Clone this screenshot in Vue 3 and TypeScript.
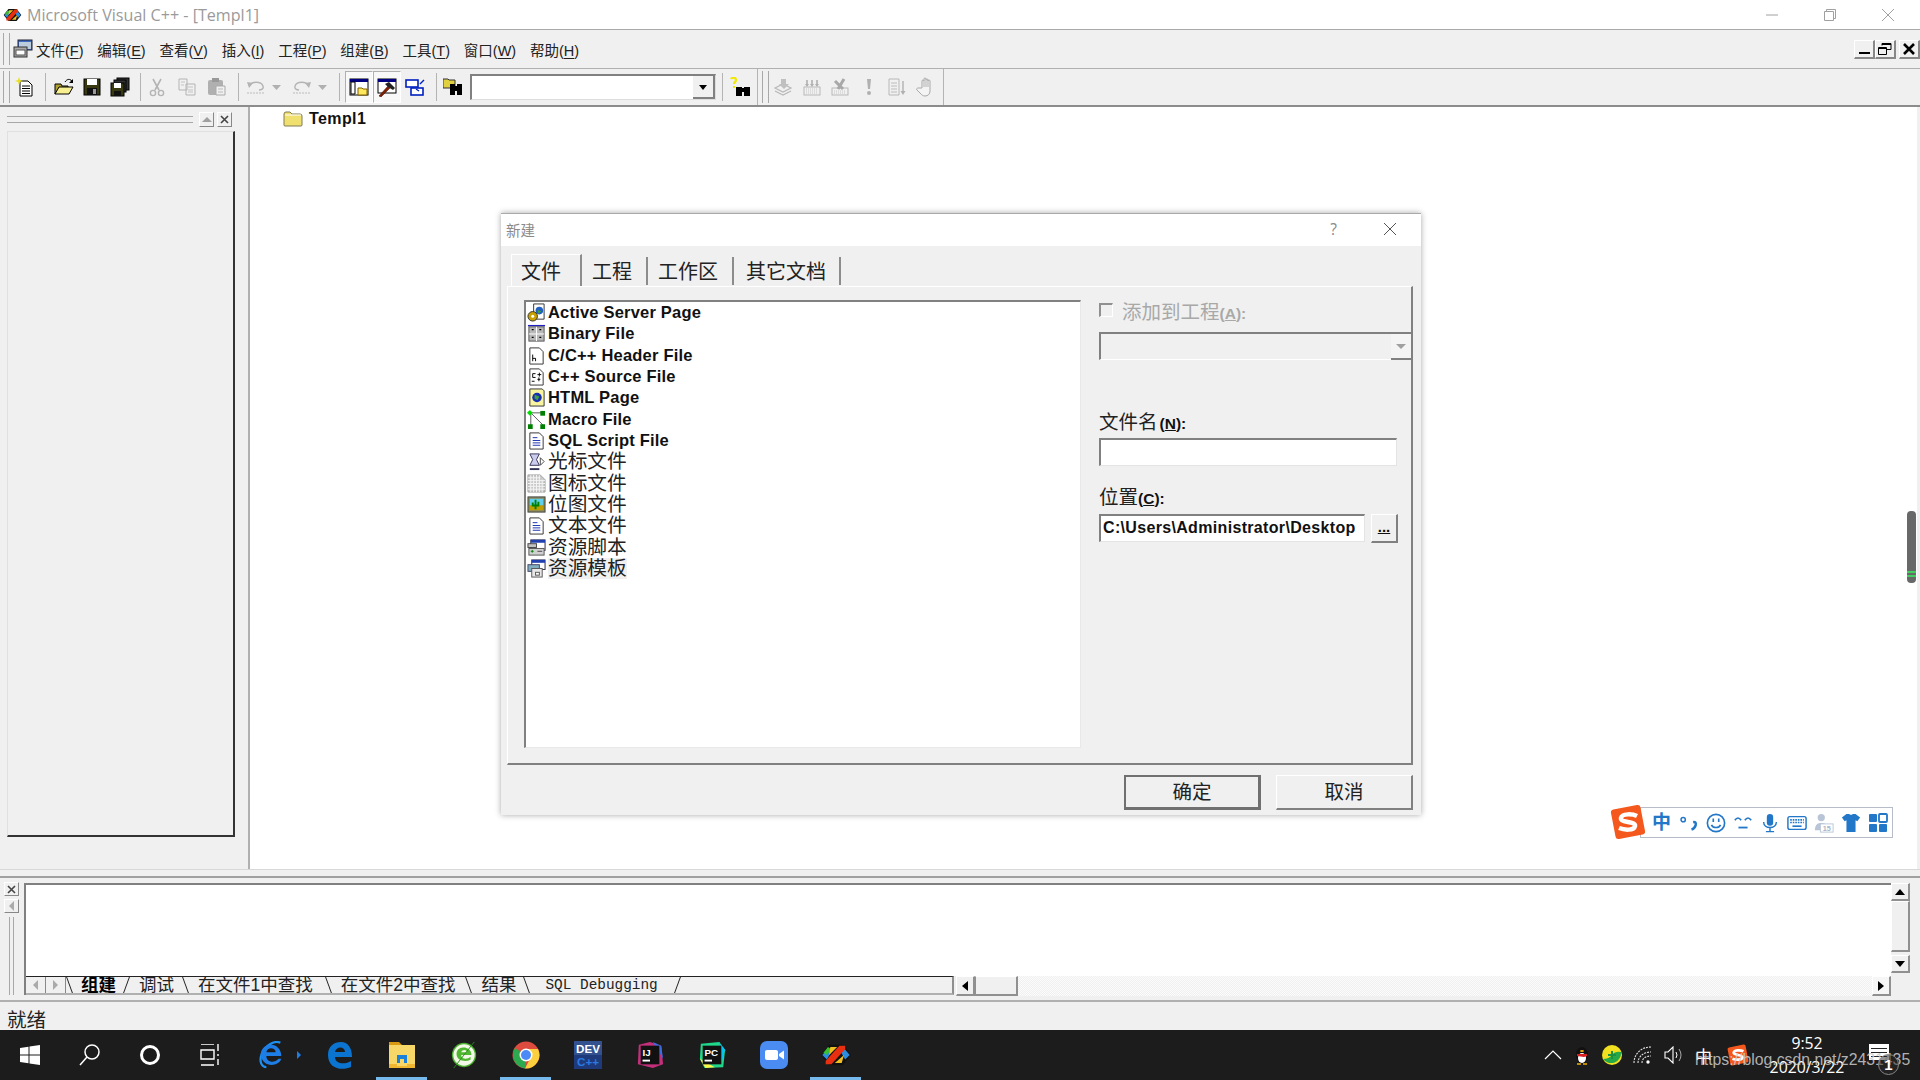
<script setup lang="ts">
interface MenuItem {
  label: string
  key: string
}
interface ToolItem {
  icon?: string
  w?: number
  l?: number
  r?: number
  pressed?: boolean
  combo?: boolean
  grip?: boolean
  sep?: boolean
}
interface OutTab {
  label: string
  before: 'back' | 'fwd'
  cls?: string
}
interface TaskApp {
  icon: string
  on?: boolean
  arrow?: boolean
}

const menus: MenuItem[] = [
  { label: '文件', key: 'F' },
  { label: '编辑', key: 'E' },
  { label: '查看', key: 'V' },
  { label: '插入', key: 'I' },
  { label: '工程', key: 'P' },
  { label: '组建', key: 'B' },
  { label: '工具', key: 'T' },
  { label: '窗口', key: 'W' },
  { label: '帮助', key: 'H' },
]

const tools: ToolItem[] = [
  { grip: true },
  { icon: 'i-new', w: 28 },
  { sep: true, l: 6, r: 4 },
  { icon: 'i-open', w: 28 },
  { icon: 'i-save', w: 28 },
  { icon: 'i-saveall', w: 28 },
  { sep: true, l: 6, r: 1 },
  { icon: 'i-cut', w: 30 },
  { icon: 'i-copy', w: 30 },
  { icon: 'i-paste', w: 30 },
  { sep: true, l: 6, r: 3 },
  { icon: 'i-undo', w: 28 },
  { icon: 'i-drop', w: 14 },
  { sep: false, l: 4 },
  { icon: 'i-redo', w: 28 },
  { icon: 'i-drop', w: 14 },
  { sep: true, l: 9, r: 5 },
  { icon: 'i-wsp', w: 28, pressed: true },
  { icon: 'i-outp', w: 28, pressed: true },
  { icon: 'i-wins', w: 28 },
  { sep: true, l: 7, r: 2 },
  { icon: 'i-find', w: 28 },
  { combo: true },
  { sep: true, l: 6, r: 3 },
  { icon: 'i-ffile', w: 28 },
]

const buildTools = ['i-compile', 'i-build', 'i-stop', 'i-exec', 'i-go', 'i-hand']

const dialogTabs = ['文件', '工程', '工作区', '其它文档']

const files = [
  { icon: 'f-asp', name: 'Active Server Page', latin: true },
  { icon: 'f-bin', name: 'Binary File', latin: true },
  { icon: 'f-h', name: 'C/C++ Header File', latin: true },
  { icon: 'f-cpp', name: 'C++ Source File', latin: true },
  { icon: 'f-html', name: 'HTML Page', latin: true },
  { icon: 'f-macro', name: 'Macro File', latin: true },
  { icon: 'f-txt', name: 'SQL Script File', latin: true },
  { icon: 'f-cur', name: '光标文件' },
  { icon: 'f-ico', name: '图标文件' },
  { icon: 'f-bmp', name: '位图文件' },
  { icon: 'f-txt', name: '文本文件' },
  { icon: 'f-rc', name: '资源脚本' },
  { icon: 'f-rct', name: '资源模板', sel: true },
]

const outTabs: OutTab[] = [
  { label: '组建', before: 'back', cls: 'active' },
  { label: '调试', before: 'fwd' },
  { label: '在文件1中查找', before: 'back', cls: 'long' },
  { label: '在文件2中查找', before: 'back', cls: 'long' },
  { label: '结果', before: 'back', cls: 'short' },
  { label: 'SQL Debugging', before: 'back', cls: 'mono' },
]

const taskApps: TaskApp[] = [
  { icon: 't-ie', arrow: true },
  { icon: 't-edge' },
  { icon: 't-files', on: true },
  { icon: 't-360' },
  { icon: 't-chrome', on: true },
  { icon: 't-dev' },
  { icon: 't-ij' },
  { icon: 't-pc' },
  { icon: 't-zoom' },
  { icon: 't-vc', on: true },
]

const imeIcons = ['m-punct', 'm-smile', 'm-eyes', 'm-mic', 'm-kbd', 'm-user', 'm-shirt', 'm-grid']
</script>

<template>
  <div class="desktop">
    <!-- shared icon sprites -->
    <svg class="sprites" width="0" height="0">
      <defs>
        <symbol id="vc-logo" viewBox="0 0 28 20">
          <path d="M8 1h12l7 9-7 9H8l-7-9z" fill="#111" />
          <path d="M2 10l5-6 3 3-4 7zM26 10l-5-6-3 3 4 7z" fill="#2c8ce0" />
          <path d="M3 8l4-5 3 2-4 5z" fill="#38c030" />
          <path d="M9 3h6l-7 7zM13 17h6l2-7z" fill="#f0c020" />
          <path d="M5 15L17 2h5v3L10 18H5z" fill="#e83010" />
        </symbol>

        <symbol id="i-vcfile" viewBox="0 0 20 20">
          <rect x="5" y="1" width="14" height="10" fill="#3d6cc0" stroke="#223" />
          <rect x="6" y="3" width="12" height="7" fill="#bcd" />
          <rect x="1" y="8" width="13" height="10" fill="#a8a8a8" stroke="#333" />
          <rect x="3" y="11" width="9" height="5" fill="#fff" stroke="#555" />
        </symbol>
        <symbol id="i-new" viewBox="0 0 20 20">
          <path d="M5 4h8l4 4v11H5z" fill="#fff" stroke="#000" />
          <path d="M7 9h8M7 11.500h8M7 14h8M7 16.500h8" stroke="#000" />
          <path d="M4 0l1 3 3 1-3 1-1 3-1-3-3-1 3-1z" fill="#e8e020" />
        </symbol>
        <symbol id="i-open" viewBox="0 0 20 20">
          <path d="M1 17V7h6l1 2h6v2H5z" fill="#b0a030" stroke="#000" />
          <path d="M1 17l4-7h14l-4 7z" fill="#f8f090" stroke="#000" />
          <path d="M11 5c2-3 4-3 6-2l1 2" fill="none" stroke="#000" />
          <path d="M19 2v4h-4z" fill="#000" />
        </symbol>
        <symbol id="i-save" viewBox="0 0 20 20">
          <rect x="2" y="2" width="16" height="16" fill="#3a3a10" stroke="#000" />
          <rect x="5" y="2" width="10" height="6" fill="#fff" />
          <rect x="5" y="11" width="10" height="7" fill="#111" />
          <rect x="11" y="12" width="3" height="5" fill="#999" />
        </symbol>
        <symbol id="i-saveall" viewBox="0 0 20 20">
          <rect x="7" y="1" width="12" height="12" fill="#333" stroke="#000" />
          <rect x="4" y="3" width="12" height="12" fill="#333" stroke="#000" />
          <rect x="1" y="6" width="13" height="13" fill="#3a3a10" stroke="#000" />
          <rect x="4" y="6" width="7" height="5" fill="#fff" />
          <rect x="4" y="14" width="7" height="5" fill="#111" />
        </symbol>
        <symbol id="i-cut" viewBox="0 0 20 20">
          <path d="M6 2l6 11M14 2L8 13" stroke="#b4b4b4" stroke-width="1.600" fill="none" />
          <circle cx="6" cy="16" r="2.600" fill="none" stroke="#b4b4b4" stroke-width="1.400" />
          <circle cx="14" cy="16" r="2.600" fill="none" stroke="#b4b4b4" stroke-width="1.400" />
        </symbol>
        <symbol id="i-copy" viewBox="0 0 20 20">
          <path d="M2 2h8v11H2zM9 7h9v11H9z" fill="#f0f0f0" stroke="#b4b4b4" />
          <path d="M4 5h4M4 8h3M11 10h5M11 13h5M11 15h5" stroke="#c4c4c4" />
        </symbol>
        <symbol id="i-paste" viewBox="0 0 20 20">
          <rect x="1" y="3" width="15" height="15" rx="2" fill="#b0b0b0" />
          <rect x="5" y="1" width="7" height="4" fill="#999" />
          <path d="M9 9h9v9H9z" fill="#f0f0f0" stroke="#aaa" />
          <path d="M11 12h5M11 15h5" stroke="#bbb" />
        </symbol>
        <symbol id="i-undo" viewBox="0 0 20 20">
          <path d="M3 9c3-5 12-5 14 0 1 3-2 4-4 4" fill="none" stroke="#b4b4b4" stroke-width="1.400" />
          <path d="M1 5l6 1-4 5z" fill="#b4b4b4" />
          <path d="M1 16h18" stroke="#bbb" stroke-dasharray="2 1" />
        </symbol>
        <symbol id="i-redo" viewBox="0 0 20 20">
          <path d="M17 9c-3-5-12-5-14 0-1 3 2 4 4 4" fill="none" stroke="#b4b4b4" stroke-width="1.400" />
          <path d="M19 5l-6 1 4 5z" fill="#b4b4b4" />
          <path d="M1 16h18" stroke="#bbb" stroke-dasharray="2 1" />
        </symbol>
        <symbol id="i-drop" viewBox="0 0 14 20">
          <path d="M2 8h9l-4.500 5z" fill="#b0b0b0" />
        </symbol>
        <symbol id="i-wsp" viewBox="0 0 20 20">
          <rect x="1" y="2" width="18" height="16" fill="#fff" stroke="#000" />
          <rect x="1" y="2" width="18" height="3" fill="#000080" />
          <path d="M2 5h4v12H2z" fill="#fff" stroke="#000" />
          <path d="M9 11h4l1 1h4v6H9z" fill="#ffe860" stroke="#806000" />
        </symbol>
        <symbol id="i-outp" viewBox="0 0 20 20">
          <rect x="1" y="2" width="18" height="14" fill="#fff" stroke="#000" />
          <rect x="1" y="2" width="18" height="3" fill="#000080" />
          <path d="M2 19l9-10 2 2-9 9z" fill="#802000" stroke="#300" stroke-width=".5" />
          <path d="M8 7l4-2 6 6-2 2-5-3z" fill="#222" />
        </symbol>
        <symbol id="i-wins" viewBox="0 0 20 20">
          <rect x="1" y="3" width="12" height="7" fill="#fff" stroke="#0020c0" stroke-width="1.600" />
          <rect x="6" y="11" width="12" height="7" fill="#fff" stroke="#0020c0" stroke-width="1.600" />
          <path d="M15 7l4-4M14 14l-3-2" stroke="#0020c0" stroke-width="1.400" />
        </symbol>
        <symbol id="i-find" viewBox="0 0 20 20">
          <path d="M0 2h5l1 1h6v8H0z" fill="#e0d040" stroke="#333" />
          <rect x="7" y="7" width="5" height="11" fill="#000" />
          <rect x="14" y="7" width="5" height="11" fill="#000" />
          <rect x="11" y="9" width="4" height="5" fill="#000" />
        </symbol>
        <symbol id="i-ffile" viewBox="0 0 20 20">
          <path d="M1 2c1-2 5-2 5 1 0 2-2 2-2 4" fill="none" stroke="#f0e800" stroke-width="2.200" />
          <rect x="3" y="9" width="2" height="2" fill="#f0e800" />
          <rect x="6" y="10" width="6" height="9" fill="#000" />
          <rect x="14" y="10" width="6" height="9" fill="#000" />
          <rect x="11" y="11" width="4" height="4" fill="#000" />
        </symbol>
        <symbol id="i-compile" viewBox="0 0 20 20">
          <path d="M2 11l8-4 8 4-8 4zM2 14l8 4 8-4" fill="none" stroke="#b8b8b8" stroke-width="1.200" />
          <path d="M8 2h5v5h3l-5 5-5-5h2z" fill="#c0c0c0" />
        </symbol>
        <symbol id="i-build" viewBox="0 0 20 20">
          <rect x="2" y="10" width="16" height="8" fill="none" stroke="#b8b8b8" />
          <path d="M4 12h12M4 14h12M4 16h12" stroke="#c8c8c8" stroke-dasharray="1 1" />
          <path d="M5 3v5M10 3v5M15 3v5" stroke="#b0b0b0" stroke-width="1.600" />
          <path d="M3 7h4l-2 3zM8 7h4l-2 3zM13 7h4l-2 3z" fill="#b0b0b0" />
        </symbol>
        <symbol id="i-stop" viewBox="0 0 20 20">
          <rect x="2" y="11" width="16" height="7" fill="none" stroke="#b8b8b8" />
          <path d="M4 14h12M4 16h12" stroke="#c8c8c8" stroke-dasharray="1 1" />
          <path d="M5 4l8 8M14 2L8 12" stroke="#a8a8a8" stroke-width="3" />
        </symbol>
        <symbol id="i-exec" viewBox="0 0 20 20">
          <path d="M8 2h4l-1 10H9z" fill="#b0b0b0" />
          <circle cx="10" cy="16" r="2" fill="#b0b0b0" />
        </symbol>
        <symbol id="i-go" viewBox="0 0 20 20">
          <path d="M2 2h10v16H2z" fill="none" stroke="#b8b8b8" />
          <path d="M4 6h6M4 9h6M4 12h6M4 15h6" stroke="#bcbcbc" />
          <path d="M16 4v11" stroke="#b0b0b0" stroke-width="1.400" />
          <path d="M13.500 14h5l-2.500 4z" fill="#b0b0b0" />
        </symbol>
        <symbol id="i-hand" viewBox="0 0 20 20">
          <path
            d="M6 11V4a1 1 0 0 1 2 0V2a1 1 0 0 1 2 0v1a1 1 0 0 1 2 0v1a1 1 0 0 1 2 0v10c0 3-2 5-5 5-2 0-3-1-4-2l-4-4c-1-1 0-2 1-2z"
            fill="#f4f4f4"
            stroke="#a8a8a8"
          />
          <path d="M8 4v6M10 3v7M12 3v7" stroke="#b0b0b0" />
        </symbol>

        <symbol id="x-folder" viewBox="0 0 20 16">
          <path d="M1 3q0-2 2-2h4l2 2h8q2 0 2 2v9q0 1-1 1H2q-1 0-1-1z" fill="#f0e070" stroke="#807a50" />
          <path d="M2 4h16" stroke="#fff" />
        </symbol>

        <symbol id="f-asp" viewBox="0 0 20 20">
          <path d="M7 1h11v16H7z" fill="#fff" stroke="#333" />
          <circle cx="13" cy="8" r="4" fill="#2060c0" />
          <path d="M11 7l4 2-3 2z" fill="#40a040" />
          <circle cx="6" cy="14" r="5" fill="#c8a000" stroke="#333" />
          <circle cx="6" cy="14" r="1.600" fill="#fff" />
        </symbol>
        <symbol id="f-bin" viewBox="0 0 20 20">
          <rect x="1" y="1" width="18" height="1.500" fill="#2020c0" />
          <rect x="2" y="3" width="16" height="15" fill="#b8b8b8" stroke="#555" />
          <path d="M10 3v15M2 10.500h16" stroke="#fff" />
          <path d="M5 6h2M13 6h2M5 14h2M13 14h2" stroke="#000" stroke-width="1.400" />
        </symbol>
        <symbol id="f-h" viewBox="0 0 20 20">
          <path d="M3 2h10l4 4v13H3z" fill="#fff" stroke="#333" />
          <path d="M6 9v7M6 13h3v3" fill="none" stroke="#000" />
        </symbol>
        <symbol id="f-cpp" viewBox="0 0 20 20">
          <path d="M3 2h10l4 4v13H3z" fill="#fff" stroke="#333" />
          <path d="M9 7H6v4h3M5 15h3M11 8h4M13 6v4M11 13h3M12.500 11v4" fill="none" stroke="#000" />
        </symbol>
        <symbol id="f-html" viewBox="0 0 20 20">
          <path d="M3 1h13l2 2v16H3z" fill="#f8f4a0" stroke="#333" />
          <circle cx="10.500" cy="10" r="5" fill="#1830b0" />
          <path d="M8 7l5 2-2 4-3-2z" fill="#40a040" />
        </symbol>
        <symbol id="f-macro" viewBox="0 0 20 20">
          <path d="M4 3l13 13M4 3v14M4 3h13" stroke="#555" fill="none" />
          <path d="M3 0l3 3-3 3-3-3z" fill="#00e000" />
          <rect x="14" y="1" width="5" height="5" fill="#008000" />
          <rect x="1" y="15" width="5" height="5" fill="#008000" />
          <rect x="14" y="15" width="5" height="5" fill="#008000" />
        </symbol>
        <symbol id="f-txt" viewBox="0 0 20 20">
          <path d="M3 2h10l4 4v13H3z" fill="#fff" stroke="#333" />
          <path d="M6 7h5M6 10h8M6 12.500h8M6 15h8" stroke="#1830b0" />
        </symbol>
        <symbol id="f-cur" viewBox="0 0 20 20">
          <path d="M3 2h10l-3 6 3 6H3l3-6z" fill="#cce" stroke="#335" />
          <path d="M3 18h10" stroke="#335" stroke-width="2" />
          <path d="M14 6l4 4-4 4z" fill="#fff" stroke="#444" />
        </symbol>
        <symbol id="f-ico" viewBox="0 0 20 20">
          <path d="M1 1h13l5 5v13H1z" fill="#c8c8c8" stroke="#a0a0a0" />
          <path d="M4 1v18M7 1v18M10 1v18M13 1v18M16 6v13M1 4h13M1 7h18M1 10h18M1 13h18M1 16h18" stroke="#f4f4f4" />
        </symbol>
        <symbol id="f-bmp" viewBox="0 0 20 20">
          <rect x="1" y="2" width="18" height="16" fill="#8a8a60" stroke="#444" />
          <rect x="3" y="4" width="14" height="7" fill="#60d0f0" />
          <rect x="3" y="11" width="14" height="5" fill="#c0a000" />
          <path d="M9 5v10M6 8v3h6V7" fill="none" stroke="#008000" stroke-width="2" />
        </symbol>
        <symbol id="f-rc" viewBox="0 0 20 20">
          <rect x="4" y="2" width="15" height="11" fill="#fff" stroke="#224" />
          <rect x="4" y="2" width="15" height="3" fill="#2040b0" />
          <rect x="1" y="6" width="9" height="4" fill="#c0c0c0" stroke="#444" />
          <rect x="2" y="11" width="16" height="7" fill="#d0d0d0" stroke="#555" />
          <path d="M4 14h3M5.500 12.500v3" stroke="#008000" />
          <path d="M11 14h5" stroke="#444" />
        </symbol>
        <symbol id="f-rct" viewBox="0 0 20 20">
          <rect x="5" y="1" width="14" height="10" fill="#fff" stroke="#224" />
          <rect x="5" y="1" width="14" height="3" fill="#2040b0" />
          <rect x="1" y="6" width="12" height="7" fill="#80b0c0" stroke="#446" />
          <rect x="5" y="10" width="11" height="9" fill="#e8e8e8" stroke="#555" />
          <rect x="9" y="14" width="4" height="3" fill="#fff" stroke="#555" />
        </symbol>

        <symbol id="t-win" viewBox="0 0 20 20">
          <path d="M0 3l8.500-1.300V9.500H0zM9.500 1.500L20 0v9.500H9.500zM0 10.500h8.500v7.800L0 17zM9.500 10.500H20V20L9.500 18.500z" fill="#fff" />
        </symbol>
        <symbol id="t-ie" viewBox="0 0 28 30">
          <path d="M24 2C18-1 8 4 4 14c-3 8 0 14 5 14" fill="none" stroke="#1e90f0" stroke-width="2.400" />
          <path d="M3 15C3 8 8 4 14 4s11 5 11 12H9c0 7 9 8 13 3h3c-3 9-20 10-22-4zm6-3h10c0-5-9-6-10 0z" fill="#1e7ee8" />
        </symbol>
        <symbol id="t-edge" viewBox="0 0 26 28">
          <path d="M1 14C1 5 7 1 14 1s11 6 11 15H8c0 7 10 8 16 4v6c-9 4-23 2-23-12zm7-3h10c0-6-9-6-10 0z" fill="#0a74d0" />
        </symbol>
        <symbol id="t-files" viewBox="0 0 28 28">
          <path d="M1 1h10l3 3H1z" fill="#d89a10" />
          <rect x="1" y="4" width="26" height="23" fill="#f7d768" />
          <path d="M9 22v-8h10v8h-3v-4h-4v4z" fill="#1a80d8" />
          <rect x="1" y="23" width="8" height="4" fill="#f0b830" />
          <rect x="19" y="23" width="8" height="4" fill="#f0b830" />
          <rect x="9" y="25" width="10" height="2" fill="#f0b830" />
        </symbol>
        <symbol id="t-360" viewBox="0 0 28 30">
          <circle cx="14" cy="15" r="13" fill="#4cb030" />
          <circle cx="14" cy="15" r="11.500" fill="#f4f8e8" />
          <path d="M6 14C6 8 11 7 14 7s8 2 8 8H11c0 5 7 5 10 2v3c-6 3-15 1-15-6zm5-2h6c0-3-5-3-6 0z" fill="#50b830" />
          <path d="M25 1L3 29" stroke="#2a8a20" stroke-width="1" />
        </symbol>
        <symbol id="t-chrome" viewBox="0 0 28 28">
          <circle cx="14" cy="14" r="13.500" fill="#dd4b3e" />
          <path d="M14 14L3 7A13.500 13.500 0 0 0 13 27.500z" fill="#2da94f" />
          <path d="M14 8h12a13.500 13.500 0 0 1-13 19.500L20 14z" fill="#fccf3e" />
          <circle cx="14" cy="14" r="6.500" fill="#fff" />
          <circle cx="14" cy="14" r="5" fill="#4c8bf5" />
        </symbol>
        <symbol id="t-dev" viewBox="0 0 30 30">
          <rect width="30" height="30" fill="#1f3a7a" />
          <rect width="30" height="15" fill="#33518f" />
          <text x="15" y="13" text-anchor="middle" font-size="12.500" font-weight="700" fill="#fff" font-family="Liberation Sans">DEV</text>
          <text x="15" y="27" text-anchor="middle" font-size="12.500" font-weight="700" fill="#2a7ae0" font-family="Liberation Sans">C++</text>
        </symbol>
        <symbol id="t-ij" viewBox="0 0 30 30">
          <path d="M3 4l12-3 12 4 2 20-11 4L2 25z" fill="#c42f7b" />
          <path d="M18 1l9 4 2 14z" fill="#3e6be0" />
          <rect x="5" y="5" width="20" height="20" fill="#111" />
          <text x="7" y="16" font-size="10.500" font-weight="700" fill="#fff" font-family="Liberation Sans">IJ</text>
          <rect x="7" y="20" width="8" height="2" fill="#fff" />
        </symbol>
        <symbol id="t-pc" viewBox="0 0 30 30">
          <path d="M3 3l20-2 6 9-2 18-20 1-5-10z" fill="#21d789" />
          <path d="M22 1l7 8-3 12z" fill="#07c3f2" />
          <path d="M2 19l6 10 10-1z" fill="#fcf84a" />
          <rect x="5" y="5" width="20" height="20" fill="#111" />
          <text x="7" y="16" font-size="10.500" font-weight="700" fill="#fff" font-family="Liberation Sans">PC</text>
          <rect x="7" y="20" width="8" height="2" fill="#fff" />
        </symbol>
        <symbol id="t-zoom" viewBox="0 0 28 28">
          <rect width="28" height="28" rx="7" fill="#4a8cf2" />
          <rect x="5" y="9" width="13" height="10" rx="2" fill="#fff" />
          <path d="M19 13l5-3.500v9L19 15z" fill="#fff" />
        </symbol>

        <symbol id="m-punct" viewBox="0 0 24 20">
          <circle cx="5" cy="6" r="2.600" fill="none" stroke="#2277c8" stroke-width="1.800" />
          <path d="M17 9q4-.5 3 3.500-1 4-5 5.500" fill="none" stroke="#2277c8" stroke-width="3" />
        </symbol>
        <symbol id="m-smile" viewBox="0 0 22 22">
          <circle cx="11" cy="11" r="9.500" fill="none" stroke="#2277c8" stroke-width="1.800" />
          <path d="M8 6v4M14 6v4" stroke="#2277c8" stroke-width="1.800" />
          <path d="M6 13c2 4 8 4 10 0" fill="none" stroke="#2277c8" stroke-width="1.800" />
        </symbol>
        <symbol id="m-eyes" viewBox="0 0 22 22">
          <path d="M2 8q3.500-5 7 0M13 8q3.500-5 7 0" fill="none" stroke="#2277c8" stroke-width="1.800" />
          <path d="M6 16h10" stroke="#2277c8" stroke-width="2" />
        </symbol>
        <symbol id="m-mic" viewBox="0 0 22 22">
          <rect x="7.500" y="1" width="7" height="13" rx="3.500" fill="#2277c8" />
          <path d="M4 10c0 8 14 8 14 0M11 16v4M6.500 20.500h9" fill="none" stroke="#2277c8" stroke-width="1.600" />
        </symbol>
        <symbol id="m-kbd" viewBox="0 0 22 18">
          <rect x="1" y="2" width="20" height="14" rx="2" fill="none" stroke="#2277c8" stroke-width="1.600" />
          <path d="M3.500 5.500h15M3.500 8.500h15" stroke="#2277c8" stroke-width="1.800" stroke-dasharray="1.800 1" />
          <path d="M6 12.500h10" stroke="#2277c8" stroke-width="1.800" />
        </symbol>
        <symbol id="m-user" viewBox="0 0 22 22">
          <circle cx="8" cy="5" r="4" fill="#b9c5d6" />
          <path d="M1 19c0-6 3-8 7-8s5 1 6 3v5z" fill="#b9c5d6" />
          <rect x="7" y="12" width="14" height="9" fill="#fff" stroke="#b9c5d6" />
          <text x="14" y="20" text-anchor="middle" font-size="8" font-weight="700" fill="#a9b5c6" font-family="Liberation Sans">15</text>
        </symbol>
        <symbol id="m-shirt" viewBox="0 0 22 22">
          <path d="M6 1h3q2 2 4 0h3l5 4-3 4-2-1v13H6V8L4 9 1 5z" fill="#2277c8" />
        </symbol>
        <symbol id="m-grid" viewBox="0 0 20 20">
          <rect x="1" y="1" width="8" height="8" rx="1" fill="#2277c8" />
          <rect x="11" y="1" width="8" height="8" rx="1" fill="none" stroke="#2277c8" stroke-width="1.800" />
          <rect x="1" y="11" width="8" height="8" rx="1" fill="#2277c8" />
          <rect x="11" y="11" width="8" height="8" rx="1" fill="#2277c8" />
        </symbol>
        <symbol id="sogou" viewBox="0 0 36 36">
          <rect x="3" y="3" width="30" height="30" rx="3" fill="#f4581c" transform="rotate(-11 18 18)" />
          <path d="M27 12c-4-2-15-3-16 2-1 5 15 3 14 8-1 5-11 4-16 2" fill="none" stroke="#fff" stroke-width="4.500" />
        </symbol>
      </defs>
    </svg>

    <header class="titlebar">
      <svg class="vc-icon"><use href="#vc-logo" /></svg>
      <span class="app-title">Microsoft Visual C++ - [Templ1]</span>
      <div class="win-controls">
        <svg width="12" height="12" viewBox="0 0 12 12"><path d="M0 6h12" stroke="#a0a0a0" /></svg>
        <svg width="12" height="12" viewBox="0 0 12 12">
          <path d="M.5 2.500h9v9h-9zM2.500 2.500v-2h9v9h-2" fill="none" stroke="#a0a0a0" />
        </svg>
        <svg width="12" height="12" viewBox="0 0 12 12"><path d="M0 0l12 12M12 0L0 12" stroke="#a0a0a0" /></svg>
      </div>
    </header>

    <nav class="menubar">
      <span class="grip"></span>
      <svg class="menu-icon"><use href="#i-vcfile" /></svg>
      <ul class="menu-list">
        <li v-for="m in menus" :key="m.key" class="menu-item">
          {{ m.label }}(<u>{{ m.key }}</u>)
        </li>
      </ul>
      <div class="mdi-controls">
        <button class="mdi-btn"><i class="mdi-min"></i></button>
        <button class="mdi-btn">
          <svg width="14" height="12" viewBox="0 0 14 12">
            <path d="M.5 4.500h8v7h-8zM.5 5.500h8M4 2.500V.5h9v6H9M4 1.500h9" fill="none" stroke="#000" />
          </svg>
        </button>
        <button class="mdi-btn mdi-close">
          <svg width="12" height="12" viewBox="0 0 12 12"><path d="M1 1l10 10M11 1L1 11" stroke="#000" stroke-width="2.600" /></svg>
        </button>
      </div>
    </nav>

    <div class="toolbar">
      <template v-for="(t, i) in tools" :key="i">
        <span v-if="t.grip" class="grip"></span>
        <span v-else-if="t.sep" class="tb-sep" :style="{ marginLeft: t.l + 'px', marginRight: t.r + 'px' }"></span>
        <span v-else-if="t.sep === false" :style="{ width: t.l + 'px' }"></span>
        <div v-else-if="t.combo" class="tb-combo">
          <span class="combo-arrow"></span>
        </div>
        <span v-else class="tb-btn" :class="{ pressed: t.pressed }" :style="{ width: t.w + 'px' }">
          <svg class="tb-icon"><use :href="'#' + t.icon" /></svg>
        </span>
      </template>
      <span class="tb-end"></span>
      <span class="grip grip-second"></span>
      <span v-for="b in buildTools" :key="b" class="tb-btn build-btn">
        <svg class="tb-icon"><use :href="'#' + b" /></svg>
      </span>
      <span class="tb-end"></span>
    </div>

    <main class="workspace">
      <aside class="dock">
        <div class="dock-head">
          <span class="dock-grip"></span>
          <span class="dock-btn"><i class="tri-up"></i></span>
          <span class="dock-btn">
            <svg width="9" height="9" viewBox="0 0 9 9"><path d="M1 1l7 7M8 1L1 8" stroke="#444" stroke-width="1.600" /></svg>
          </span>
        </div>
        <div class="dock-body"></div>
      </aside>
      <section class="editor">
        <div class="tree-row">
          <svg class="tree-icon"><use href="#x-folder" /></svg>
          <span class="tree-label">Templ1</span>
        </div>
      </section>
    </main>

    <section class="output">
      <div class="output-side">
        <span class="side-btn">
          <svg width="9" height="9" viewBox="0 0 9 9"><path d="M1 1l7 7M8 1L1 8" stroke="#444" stroke-width="1.600" /></svg>
        </span>
        <span class="side-btn"><i class="tri-left-gray"></i></span>
        <span class="side-grip"></span>
      </div>
      <div class="output-main">
        <div class="output-text"></div>
        <div class="output-bar">
          <div class="out-tabs">
            <span class="tab-nav"><i class="tri-left-gray"></i></span>
            <span class="tab-nav"><i class="tri-right-gray"></i></span>
            <template v-for="t in outTabs" :key="t.label">
              <span class="slant" :class="t.before"></span>
              <span class="out-tab" :class="t.cls">{{ t.label }}</span>
            </template>
            <span class="slant fwd"></span>
          </div>
          <div class="hscroll">
            <span class="sb-btn"><i class="tri-left"></i></span>
            <span class="sb-thumb"></span>
            <span class="sb-track"></span>
            <span class="sb-btn"><i class="tri-right"></i></span>
          </div>
        </div>
      </div>
      <div class="vscroll">
        <span class="sb-btn-v"><i class="tri-up-black"></i></span>
        <span class="sb-thumb-v"></span>
        <span class="sb-btn-v down"><i class="tri-down"></i></span>
      </div>
    </section>

    <footer class="statusbar">就绪</footer>

    <div class="taskbar">
      <span class="task-slot"><svg class="t20"><use href="#t-win" /></svg></span>
      <span class="task-slot">
        <svg width="24" height="24" viewBox="0 0 24 24">
          <circle cx="14" cy="9" r="7" fill="none" stroke="#fff" stroke-width="1.500" />
          <path d="M9 14l-7 8" stroke="#fff" stroke-width="1.500" />
        </svg>
      </span>
      <span class="task-slot"><i class="cortana"></i></span>
      <span class="task-slot">
        <svg width="20" height="22" viewBox="0 0 20 22">
          <path d="M1 0h13M1 21h13M1 6h13v9H1zM18 0v7M18 10v2M18 15v6" fill="none" stroke="#fff" stroke-width="1.400" />
        </svg>
      </span>
      <span v-for="a in taskApps" :key="a.icon" class="task-app" :class="{ arrow: a.arrow }">
        <svg v-if="a.icon !== 't-vc'" class="app-ic"><use :href="'#' + a.icon" /></svg>
        <svg v-else class="app-vc"><use href="#vc-logo" /></svg>
        <i v-if="a.arrow" class="jump"></i>
        <span v-if="a.on" class="under"></span>
      </span>

      <div class="tray">
        <svg width="18" height="10" viewBox="0 0 18 10"><path d="M1 9l8-8 8 8" fill="none" stroke="#fff" stroke-width="1.200" /></svg>
        <svg width="18" height="20" viewBox="0 0 18 20">
          <ellipse cx="9" cy="10" rx="6" ry="8" fill="#111" />
          <ellipse cx="9" cy="13" rx="4" ry="5" fill="#fff" />
          <path d="M4 9h10v2l-3 1-7-1z" fill="#d82020" />
          <ellipse cx="9" cy="6" rx="2" ry="1" fill="#f0b000" />
          <path d="M4 19h4M10 19h4" stroke="#f0b000" stroke-width="1.500" />
        </svg>
        <svg width="20" height="20" viewBox="0 0 20 20">
          <circle cx="10" cy="10" r="10" fill="#f0e020" />
          <path d="M1 14q6 0 9-4t9-3a10 10 0 0 1-18 7z" fill="#24a848" />
          <path d="M10 6v8M6 10h8" stroke="#1a9040" stroke-width="2" />
        </svg>
        <svg width="20" height="18" viewBox="0 0 20 18">
          <path d="M1 17C1 8 8 1 18 1M5 17c0-6 5-11 13-11M9 17c0-4 3-7 9-7" fill="none" stroke="#ddd" stroke-width="1.100" stroke-dasharray="2 1" />
          <circle cx="15" cy="16" r="1.700" fill="#fff" />
        </svg>
        <svg width="20" height="18" viewBox="0 0 20 18">
          <path d="M1 6h3l5-5v16l-5-5H1z" fill="none" stroke="#fff" stroke-width="1.100" />
          <path d="M12 6q2 3 0 6" fill="none" stroke="#fff" />
          <path d="M15 3q4 6 0 12" fill="none" stroke="#aaa" />
        </svg>
        <span class="tray-ime">中</span>
        <svg class="tray-sogou" width="22" height="22"><use href="#sogou" /></svg>
      </div>
      <div class="clock">
        <span>9:52</span>
        <span>2020/3/22</span>
      </div>
      <span class="action-center">
        <i></i><i></i><i></i>
      </span>
    </div>

    <!-- floating: 新建 dialog -->
    <div class="dialog">
      <div class="dlg-title">
        <span>新建</span>
        <span class="dlg-help">?</span>
        <svg width="12" height="12" viewBox="0 0 12 12"><path d="M0 0l12 12M12 0L0 12" stroke="#555" /></svg>
      </div>
      <div class="dlg-body">
        <div class="dlg-tabs">
          <span v-for="(t, i) in dialogTabs" :key="t" class="dlg-tab" :class="{ active: i === 0 }">{{ t }}</span>
        </div>
        <div class="dlg-page">
          <ul class="file-list">
            <li v-for="f in files" :key="f.name" class="file-row">
              <svg class="file-icon"><use :href="'#' + f.icon" /></svg>
              <span class="file-name" :class="{ latin: f.latin, sel: f.sel }">{{ f.name }}</span>
            </li>
          </ul>
          <div class="side-form">
            <label class="check-row">
              <i class="check-box"></i>
              <span>添加到工程<b>(<u>A</u>):</b></span>
            </label>
            <div class="sel-disabled"><span class="sel-btn"><i class="tri-down-gray"></i></span></div>
            <label class="field-label name-label">文件名<b class="key-gap">(<u>N</u>):</b></label>
            <div class="text-input name-input"></div>
            <label class="field-label loc-label">位置<b>(<u>C</u>):</b></label>
            <div class="loc-row">
              <div class="text-input loc-input">C:\Users\Administrator\Desktop</div>
              <span class="browse"><u>...</u></span>
            </div>
          </div>
        </div>
        <div class="dlg-foot">
          <button class="dlg-btn default">确定</button>
          <button class="dlg-btn">取消</button>
        </div>
      </div>
    </div>

    <!-- floating: 输入法状态条 -->
    <div class="ime-bar">
      <svg class="ime-logo"><use href="#sogou" /></svg>
      <span class="ime-zh">中</span>
      <svg v-for="m in imeIcons" :key="m" class="ime-ic"><use :href="'#' + m" /></svg>
    </div>

    <div class="float-scroll"><i></i><i></i></div>
    <span class="watermark">https://blog.csdn.net/z2431435</span>
    <span class="badge">1</span>
  </div>
</template>

<style>
html,
body {
  margin: 0;
  background: #fff;
}
</style>

<style scoped>
.desktop {
  position: relative;
  width: 1920px;
  height: 1080px;
  overflow: hidden;
  display: flex;
  flex-direction: column;
  background: #f0f0f0;
  font-family: 'Liberation Sans', 'Noto Sans CJK SC', sans-serif;
  color: #111;
}

.sprites {
  position: absolute;
}

button {
  font-family: inherit;
  padding: 0;
}

ul {
  list-style: none;
  margin: 0;
  padding: 0;
}

/* title bar */
.titlebar {
  height: 29px;
  flex: none;
  display: flex;
  align-items: center;
  background: #fff;
  border-bottom: 1px solid #a9a9a9;
  padding-left: 3px;
}

.vc-icon {
  width: 19px;
  height: 14px;
}

.app-title {
  margin-left: 5px;
  font-family: 'Open Sans', sans-serif;
  font-size: 16.1px;
  color: #9a9a9a;
}

.win-controls {
  margin-left: auto;
  display: flex;
  gap: 46px;
  padding-right: 26px;
}

/* menu */
.menubar {
  height: 38px;
  flex: none;
  display: flex;
  align-items: center;
  border-bottom: 1px solid #b0b0b0;
  padding-left: 3px;
}

.grip {
  width: 3px;
  height: 32px;
  flex: none;
  border-left: 1px solid #a8a8a8;
  border-right: 1px solid #a8a8a8;
  margin-right: 1px;
  margin-left: 0;
  padding: 0 1px;
}

.menu-icon {
  width: 20px;
  height: 20px;
  margin-left: 2px;
}

.menu-list {
  display: flex;
  gap: 13.8px;
  margin-left: 3px;
}

.menu-item {
  font-size: 14.5px;
  color: #222;
}

.menu-item u {
  text-underline-offset: 2px;
}

.mdi-controls {
  margin-left: auto;
  display: flex;
  align-items: center;
}

.mdi-btn {
  width: 21px;
  height: 19px;
  display: flex;
  align-items: center;
  justify-content: center;
  background: #f0f0f0;
  border: 0;
  border-top: 1px solid #fff;
  border-left: 1px solid #fff;
  border-right: 2px solid #888;
  border-bottom: 2px solid #888;
}

.mdi-close {
  margin-left: 3px;
}

.mdi-min {
  width: 11px;
  height: 2px;
  background: #000;
  margin-top: 8px;
}

/* toolbar */
.toolbar {
  height: 36px;
  flex: none;
  display: flex;
  align-items: center;
  padding-left: 3px;
  border-bottom: 2px solid #8c8c8c;
  box-sizing: content-box;
}

.tb-sep {
  width: 1px;
  height: 28px;
  background: #b4b4b4;
  flex: none;
}

.tb-btn {
  height: 32px;
  flex: none;
  display: flex;
  align-items: center;
  justify-content: center;
  box-sizing: border-box;
}

.tb-btn.pressed {
  background: #f8f8f8;
  border-top: 1px solid #b0b0b0;
  border-left: 1px solid #b0b0b0;
  border-right: 1px solid #fff;
  border-bottom: 1px solid #fff;
}

.tb-icon {
  width: 20px;
  height: 20px;
}

.tb-combo {
  width: 246px;
  height: 26px;
  box-sizing: border-box;
  flex: none;
  margin-left: 3px;
  background: #fff;
  border-top: 2px solid #808080;
  border-left: 2px solid #808080;
  border-right: 1px solid #ddd;
  border-bottom: 1px solid #ddd;
  position: relative;
  display: flex;
  justify-content: flex-end;
}

.combo-arrow {
  width: 20px;
  background: #f0f0f0;
  border-right: 2px solid #808080;
  border-bottom: 2px solid #808080;
  display: flex;
  align-items: center;
  justify-content: center;
}

.combo-arrow::after {
  content: '';
  border: 4px solid transparent;
  border-top: 5px solid #000;
  margin-top: 5px;
}

.tb-end {
  width: 1px;
  height: 36px;
  background: #b4b4b4;
  margin-left: 3px;
  flex: none;
}

.grip-second {
  margin-left: 4px;
  margin-right: 0;
}

.build-btn {
  width: 28.5px;
}

/* main */
.workspace {
  flex: 1;
  display: flex;
  min-height: 0;
  margin-bottom: 6px;
  border-bottom: 1px solid #d8d8d8;
}

.dock {
  width: 250px;
  flex: none;
  box-sizing: border-box;
  border-right: 2px solid #b0b0b0;
  padding: 0 13px 32px 7px;
  display: flex;
  flex-direction: column;
}

.dock-head {
  height: 24px;
  flex: none;
  display: flex;
  align-items: center;
}

.dock-grip {
  width: 192px;
  height: 5px;
  border-top: 1px solid #a8a8a8;
  border-bottom: 1px solid #a8a8a8;
  margin-right: 6px;
}

.dock-btn {
  width: 15px;
  height: 15px;
  margin-right: 3px;
  box-sizing: border-box;
  flex: none;
  display: flex;
  align-items: center;
  justify-content: center;
  border-right: 1px solid #888;
  border-bottom: 1px solid #888;
  border-top: 1px solid #fff;
  border-left: 1px solid #fff;
}

.tri-up {
  border: 5px solid transparent;
  border-bottom: 5px solid #a0a0a0;
  margin-top: -5px;
}

.dock-body {
  flex: 1;
  border-top: 1px solid #e0e0e0;
  border-left: 1px solid #e0e0e0;
  border-right: 2px solid #333;
  border-bottom: 2px solid #333;
}

.editor {
  flex: 1;
  background: #fff;
  margin-right: 3px;
}

.tree-row {
  display: flex;
  align-items: center;
  height: 24px;
  padding-left: 33px;
}

.tree-icon {
  width: 20px;
  height: 16px;
}

.tree-label {
  margin-left: 6px;
  font-size: 16px;
  font-weight: 700;
  letter-spacing: 0.4px;
}

/* output */
.output {
  height: 124px;
  flex: none;
  box-sizing: border-box;
  display: flex;
  border-top: 2px solid #a0a0a0;
  padding: 5px 0 5px 4px;
}

.output-side {
  width: 20px;
  flex: none;
  display: flex;
  flex-direction: column;
  gap: 3px;
  margin-top: -1px;
}

.side-btn {
  width: 15px;
  height: 14px;
  box-sizing: border-box;
  display: flex;
  align-items: center;
  justify-content: center;
  border-right: 1px solid #888;
  border-bottom: 1px solid #888;
  border-top: 1px solid #fff;
  border-left: 1px solid #fff;
}

.side-grip {
  width: 3px;
  flex: 1;
  margin: 1px 0 0 5px;
  border-left: 1px solid #a8a8a8;
  border-right: 1px solid #a8a8a8;
}

.tri-left-gray {
  border: 5px solid transparent;
  border-right: 5px solid #aaa;
  border-left: 0;
}

.tri-right-gray {
  border: 5px solid transparent;
  border-left: 5px solid #aaa;
  border-right: 0;
}

.output-main {
  flex: 1;
  display: flex;
  flex-direction: column;
  min-width: 0;
  border-top: 2px solid #808080;
  border-left: 2px solid #808080;
}

.output-text {
  flex: 1;
  background: #fff;
}

.output-bar {
  height: 19px;
  flex: none;
  display: flex;
}

.out-tabs {
  width: 928px;
  flex: none;
  box-sizing: border-box;
  display: flex;
  align-items: stretch;
  border-top: 1px solid #222;
  border-bottom: 2px solid #b0b0b0;
  border-right: 2px solid #909090;
  overflow: hidden;
}

.tab-nav {
  width: 20px;
  flex: none;
  display: flex;
  align-items: center;
  justify-content: center;
  box-sizing: border-box;
  border-right: 1px solid #888;
}

.slant {
  width: 8px;
  flex: none;
  position: relative;
}

.slant::after {
  content: '';
  position: absolute;
  left: 3px;
  top: 0;
  bottom: 0;
  width: 1px;
  background: #222;
}

.slant.back::after {
  transform: skewX(20deg);
}

.slant.fwd::after {
  transform: skewX(-20deg);
}

.out-tab {
  padding: 0 8px;
  font-size: 17.5px;
  line-height: 17px;
  color: #222;
  white-space: nowrap;
}

.out-tab.active {
  font-weight: 700;
  color: #000;
  padding: 0 7px 0 7px;
}

.out-tab.long {
  padding: 0 12px 0 8px;
}

.out-tab.long + .slant + .out-tab.long {
  padding-right: 10px;
}

.out-tab.short {
  padding: 0 7px 0 8px;
}

.out-tab.mono {
  font-family: 'Liberation Mono', monospace;
  font-size: 14.4px;
  padding: 0 16px 0 14px;
}

.hscroll {
  flex: 1;
  display: flex;
  height: 20px;
}

.sb-btn {
  width: 19px;
  flex: none;
  margin-left: 2px;
  box-sizing: border-box;
  display: flex;
  align-items: center;
  justify-content: center;
  border-right: 2px solid #909090;
  border-bottom: 2px solid #909090;
  border-top: 1px solid #fff;
  border-left: 1px solid #fff;
}

.sb-btn:last-child {
  margin-left: 0;
  background: #f6f6f6;
}

.sb-thumb {
  width: 43px;
  flex: none;
  box-sizing: border-box;
  border-right: 2px solid #909090;
  border-bottom: 2px solid #909090;
  border-top: 1px solid #fff;
  border-left: 1px solid #909090;
}

.sb-track {
  flex: 1;
  background-color: #f8f8f8;
  background-image: repeating-conic-gradient(#f0f0f0 0 25%, #fbfbfb 0 50%);
  background-size: 2px 2px;
}

.tri-left {
  border: 5px solid transparent;
  border-right: 6px solid #000;
  border-left: 0;
}

.tri-right {
  border: 5px solid transparent;
  border-left: 6px solid #000;
  border-right: 0;
}

.vscroll {
  width: 29px;
  flex: none;
  display: flex;
  flex-direction: column;
  align-items: flex-start;
  padding-right: 10px;
  box-sizing: border-box;
  margin-bottom: 22px;
}

.sb-btn-v,
.sb-thumb-v {
  width: 19px;
  box-sizing: border-box;
  display: flex;
  align-items: center;
  justify-content: center;
  border-right: 2px solid #909090;
  border-bottom: 2px solid #909090;
  border-top: 1px solid #fff;
  border-left: 1px solid #fff;
}

.sb-btn-v {
  height: 18px;
  flex: none;
}

.sb-btn-v.down {
  margin-top: 3px;
}

.sb-thumb-v {
  flex: 1;
}

.tri-up-black {
  border: 5px solid transparent;
  border-bottom: 6px solid #000;
  border-top: 0;
}

.tri-down {
  border: 5px solid transparent;
  border-top: 6px solid #000;
  border-bottom: 0;
}

.statusbar {
  height: 30px;
  flex: none;
  box-sizing: border-box;
  border-top: 2px solid #b0b0b0;
  padding-left: 7px;
  font-size: 19.5px;
  line-height: 36px;
  color: #222;
}

/* taskbar */
.taskbar {
  height: 50px;
  flex: none;
  display: flex;
  align-items: center;
  background: #1c1c1c;
  color: #fff;
  position: relative;
}

.task-slot {
  width: 60px;
  flex: none;
  display: flex;
  align-items: center;
  justify-content: center;
}

.t20 {
  width: 20px;
  height: 20px;
}

.cortana {
  width: 14px;
  height: 14px;
  border: 3px solid #fff;
  border-radius: 50%;
  display: block;
}

.task-app {
  position: relative;
  width: 62px;
  height: 50px;
  flex: none;
  display: flex;
  align-items: center;
  justify-content: center;
}

.task-app.arrow {
  width: 69px;
  padding-right: 7px;
  box-sizing: border-box;
}

.app-ic {
  width: 28px;
  height: 28px;
}

.app-vc {
  width: 32px;
  height: 24px;
}

.jump {
  position: absolute;
  right: 8px;
  border: 4px solid transparent;
  border-left: 4px solid #1e7ee8;
  border-right: 0;
}

.under {
  position: absolute;
  left: 5px;
  right: 6px;
  bottom: 0;
  height: 3px;
  background: #76b9ed;
}

.tray {
  margin-left: auto;
  display: flex;
  align-items: center;
  gap: 11px;
}

.tray-ime {
  font-size: 17px;
}

.tray-sogou {
  margin-left: 4px;
}

.clock {
  width: 90px;
  margin-left: 13px;
  display: flex;
  flex-direction: column;
  align-items: center;
  font-family: 'Open Sans', sans-serif;
  font-size: 15.8px;
  line-height: 24px;
  white-space: nowrap;
}

.action-center {
  width: 20px;
  height: 16px;
  margin: 0 31px 6px 17px;
  flex: none;
  padding: 2px;
  box-sizing: border-box;
  background: #fff;
  display: flex;
  flex-direction: column;
  justify-content: space-around;
}

.action-center i {
  height: 1px;
  background: #222;
}

/* dialog */
.dialog {
  position: absolute;
  left: 501px;
  top: 213px;
  width: 920px;
  height: 602px;
  display: flex;
  flex-direction: column;
  box-shadow: 0 0 6px rgba(0, 0, 0, 0.35);
  border-top: 1px solid #aaa;
  box-sizing: border-box;
  z-index: 2;
}

.dlg-title {
  height: 32px;
  flex: none;
  box-sizing: border-box;
  padding: 0 25px 2px 5px;
  background: #fff;
  display: flex;
  align-items: center;
  font-size: 14.5px;
  color: #8a8a8a;
}

.dlg-help {
  margin-left: auto;
  margin-right: 47px;
  font-family: 'Open Sans', sans-serif;
  font-size: 15.5px;
}

.dlg-body {
  flex: 1;
  min-height: 0;
  display: flex;
  flex-direction: column;
  background: #f0f0f0;
  padding: 8px 8px 0 6px;
}

.dlg-tabs {
  height: 32px;
  flex: none;
  display: flex;
  padding-left: 4px;
}

.dlg-tab {
  font-size: 20px;
  color: #222;
  padding: 1px 14px 0 10px;
  border-right: 2px solid #8c8c8c;
  margin: 3px 0 1px;
  line-height: 28px;
  white-space: nowrap;
}

.dlg-tab:nth-child(4) {
  padding: 1px 13px 0 12px;
}

.dlg-tab.active {
  padding: 3px 19px 0 9px;
  margin: 0;
  background: #f0f0f0;
  border-top: 1px solid #fff;
  border-left: 1px solid #fff;
  margin-bottom: -1px;
}

.dlg-page {
  flex: 1;
  min-height: 0;
  box-sizing: border-box;
  display: flex;
  gap: 18px;
  padding: 13px 0 15px 16px;
  border-top: 1px solid #fff;
  border-left: 1px solid #fff;
  border-right: 2px solid #808080;
  border-bottom: 2px solid #808080;
}

.file-list {
  width: 557px;
  flex: none;
  box-sizing: border-box;
  background: #fff;
  border-top: 2px solid #808080;
  border-left: 2px solid #808080;
  border-bottom: 1px solid #e8e8e8;
  border-right: 1px solid #e8e8e8;
  padding-left: 1px;
  overflow: hidden;
}

.file-row {
  height: 21.33px;
  display: flex;
  align-items: center;
  white-space: nowrap;
}

.file-icon {
  width: 19px;
  height: 19px;
  flex: none;
}

.file-name {
  margin-left: 2px;
  font-size: 19.7px;
  line-height: 21px;
  color: #222;
}

.file-name.latin {
  font-size: 16.5px;
  font-weight: 700;
  letter-spacing: 0.2px;
  color: #111;
}

.file-name.sel {
  background: #f0f0f0;
}

.side-form {
  flex: 1;
  min-width: 0;
  display: flex;
  flex-direction: column;
  position: relative;
}

.check-row {
  height: 20px;
  display: flex;
  align-items: center;
  gap: 9px;
  font-size: 19.5px;
  color: #a8a8a8;
}

.check-row b {
  font-family: 'Liberation Sans', sans-serif;
  font-size: 15.5px;
}

.check-box {
  width: 14px;
  height: 14px;
  box-sizing: border-box;
  display: block;
  background: #f0f0f0;
  border-top: 2px solid #909090;
  border-left: 2px solid #909090;
  border-right: 1px solid #fff;
  border-bottom: 1px solid #fff;
}

.sel-disabled {
  height: 28px;
  width: 314px;
  box-sizing: border-box;
  margin-top: 12px;
  background: #f0f0f0;
  border-top: 2px solid #808080;
  border-left: 2px solid #808080;
  border-bottom: 1px solid #fff;
  display: flex;
  justify-content: flex-end;
}

.sel-btn {
  width: 20px;
  height: 24px;
  background: #f4f4f4;
  display: flex;
  align-items: center;
  justify-content: center;
  border-right: 2px solid #808080;
  border-bottom: 2px solid #808080;
}

.tri-down-gray {
  border: 5px solid transparent;
  border-top: 5px solid #a0a0a0;
  border-bottom: 0;
}

.field-label {
  font-size: 19.5px;
  line-height: 24px;
  color: #222;
}

.field-label b {
  font-family: 'Liberation Sans', sans-serif;
  font-size: 15.5px;
  color: #111;
}

.key-gap {
  margin-left: 2px;
}

.name-label {
  margin-top: 50px;
}

.loc-label {
  margin-top: 19px;
}

.text-input {
  height: 28px;
  box-sizing: border-box;
  background: #fff;
  border-top: 2px solid #808080;
  border-left: 2px solid #808080;
  border-right: 1px solid #e4e4e4;
  border-bottom: 1px solid #e4e4e4;
}

.name-input {
  width: 298px;
  margin-top: 2px;
}

.loc-row {
  display: flex;
  gap: 6px;
  margin-top: 3px;
}

.loc-input {
  width: 266px;
  padding-left: 2px;
  font-size: 16px;
  font-weight: 700;
  line-height: 24px;
  letter-spacing: 0.33px;
  color: #111;
  white-space: nowrap;
}

.browse {
  width: 27px;
  height: 29px;
  box-sizing: border-box;
  text-align: center;
  font-size: 15px;
  font-weight: 700;
  line-height: 24px;
  border-top: 1px solid #fff;
  border-left: 1px solid #fff;
  border-right: 2px solid #808080;
  border-bottom: 2px solid #808080;
}

.dlg-foot {
  height: 50px;
  flex: none;
  display: flex;
  justify-content: flex-end;
  align-items: flex-start;
  gap: 15px;
  padding-top: 10px;
  box-sizing: border-box;
}

.dlg-btn {
  width: 137px;
  height: 35px;
  box-sizing: border-box;
  background: #f0f0f0;
  font-size: 19.5px;
  line-height: 28px;
  color: #222;
  border: 0;
  border-top: 1px solid #fff;
  border-left: 1px solid #fff;
  border-right: 2px solid #808080;
  border-bottom: 2px solid #808080;
}

.dlg-btn.default {
  border-top: 2px solid #707070;
  border-left: 2px solid #707070;
  border-right: 3px solid #707070;
  border-bottom: 3px solid #707070;
}

/* ime */
.ime-bar {
  position: absolute;
  left: 1640px;
  top: 807px;
  width: 253px;
  height: 31px;
  box-sizing: border-box;
  background: #fff;
  border: 1px solid #b8bcc8;
  display: flex;
  align-items: center;
  padding-left: 11px;
  z-index: 2;
}

.ime-logo {
  position: absolute;
  left: -31px;
  top: -4px;
  width: 36px;
  height: 36px;
}

.ime-zh {
  width: 20px;
  color: #2277c8;
  font-size: 19px;
  font-weight: 700;
  line-height: 28px;
}

.ime-ic {
  width: 20px;
  height: 20px;
  margin-left: 7px;
}

.float-scroll {
  position: absolute;
  left: 1907px;
  top: 511px;
  width: 9px;
  height: 72px;
  border-radius: 4px;
  background: #686868;
  display: flex;
  flex-direction: column;
  justify-content: flex-end;
  gap: 2px;
  padding-bottom: 6px;
  box-sizing: border-box;
}

.float-scroll i {
  height: 2px;
  background: #3fd060;
}

.watermark {
  position: absolute;
  left: 1695px;
  top: 1051px;
  font-size: 15.8px;
  color: rgba(205, 205, 205, 0.85);
  z-index: 3;
}

.badge {
  position: absolute;
  left: 1878px;
  top: 1054px;
  width: 19px;
  height: 19px;
  border-radius: 50%;
  border: 1px solid #888;
  background: rgba(40, 40, 40, 0.5);
  color: #fff;
  font-size: 15px;
  font-weight: 700;
  line-height: 19px;
  text-align: center;
  z-index: 3;
}
</style>
